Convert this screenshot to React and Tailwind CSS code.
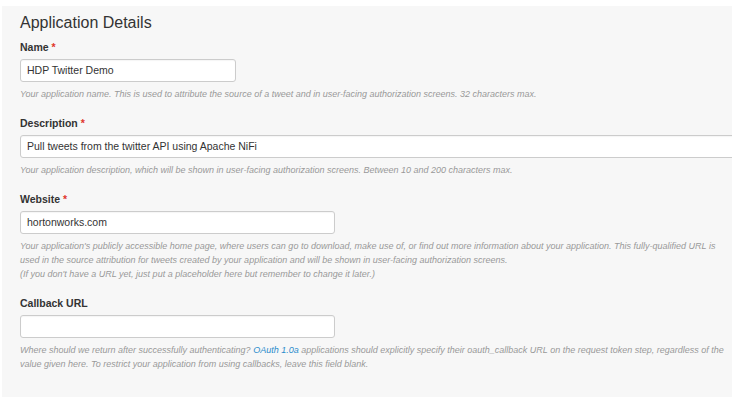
const font = { fontFamily: '"Helvetica Neue", Helvetica, "Liberation Sans", Arial, sans-serif' };

const Label = ({ children, required }) => (
  <div className="text-[10.5px] leading-[13px] font-bold text-[#333] mb-[5px]">
    {children}
    {required && <span className="text-[#e0362c] ml-[3px]">*</span>}
  </div>
);

const Help = ({ children }) => (
  <p className="mt-[5px] text-[9px] leading-[14px] italic text-[#999] whitespace-nowrap">{children}</p>
);

const Field = ({ label, required, value, width, children }) => (
  <div className="mb-[16px]">
    <Label required={required}>{label}</Label>
    <div
      className={`${width} h-[23px] bg-white border border-[#ccc] rounded-[3px] px-[6px] flex items-center text-[10.5px] text-[#333] shadow-[inset_0_1px_1px_rgba(0,0,0,0.04)]`}
    >
      {value}
    </div>
    <Help>{children}</Help>
  </div>
);

export default function App() {
  return (
    <div className="w-[732px] h-[413px] bg-white overflow-hidden" style={font}>
      <div className="ml-[2px] mt-[6px] bg-[#f7f7f7] pl-[18px] pt-[7px] pb-[10px]">
        <h2 className="text-[16px] leading-[20px] font-normal text-[#333] mb-[8px]">Application Details</h2>

        <Field label="Name" required value="HDP Twitter Demo" width="w-[216px]">
          Your application name. This is used to attribute the source of a tweet and in user-facing authorization screens. 32 characters max.
        </Field>

        <Field label="Description" required value="Pull tweets from the twitter API using Apache NiFi" width="w-[730px] rounded-r-none">
          Your application description, which will be shown in user-facing authorization screens. Between 10 and 200 characters max.
        </Field>

        <Field label="Website" required value="hortonworks.com" width="w-[315px]">
          Your application's publicly accessible home page, where users can go to download, make use of, or find out more information about your application. This fully-qualified URL is
          <br />
          used in the source attribution for tweets created by your application and will be shown in user-facing authorization screens.
          <br />
          (If you don't have a URL yet, just put a placeholder here but remember to change it later.)
        </Field>

        <Field label="Callback URL" value="" width="w-[315px]">
          Where should we return after successfully authenticating?{' '}
          <a className="text-[#2a8ccc] not-italic-none">OAuth 1.0a</a> applications should explicitly specify their oauth_callback URL on the request token step, regardless of the
          <br />
          value given here. To restrict your application from using callbacks, leave this field blank.
        </Field>
      </div>
    </div>
  );
}
